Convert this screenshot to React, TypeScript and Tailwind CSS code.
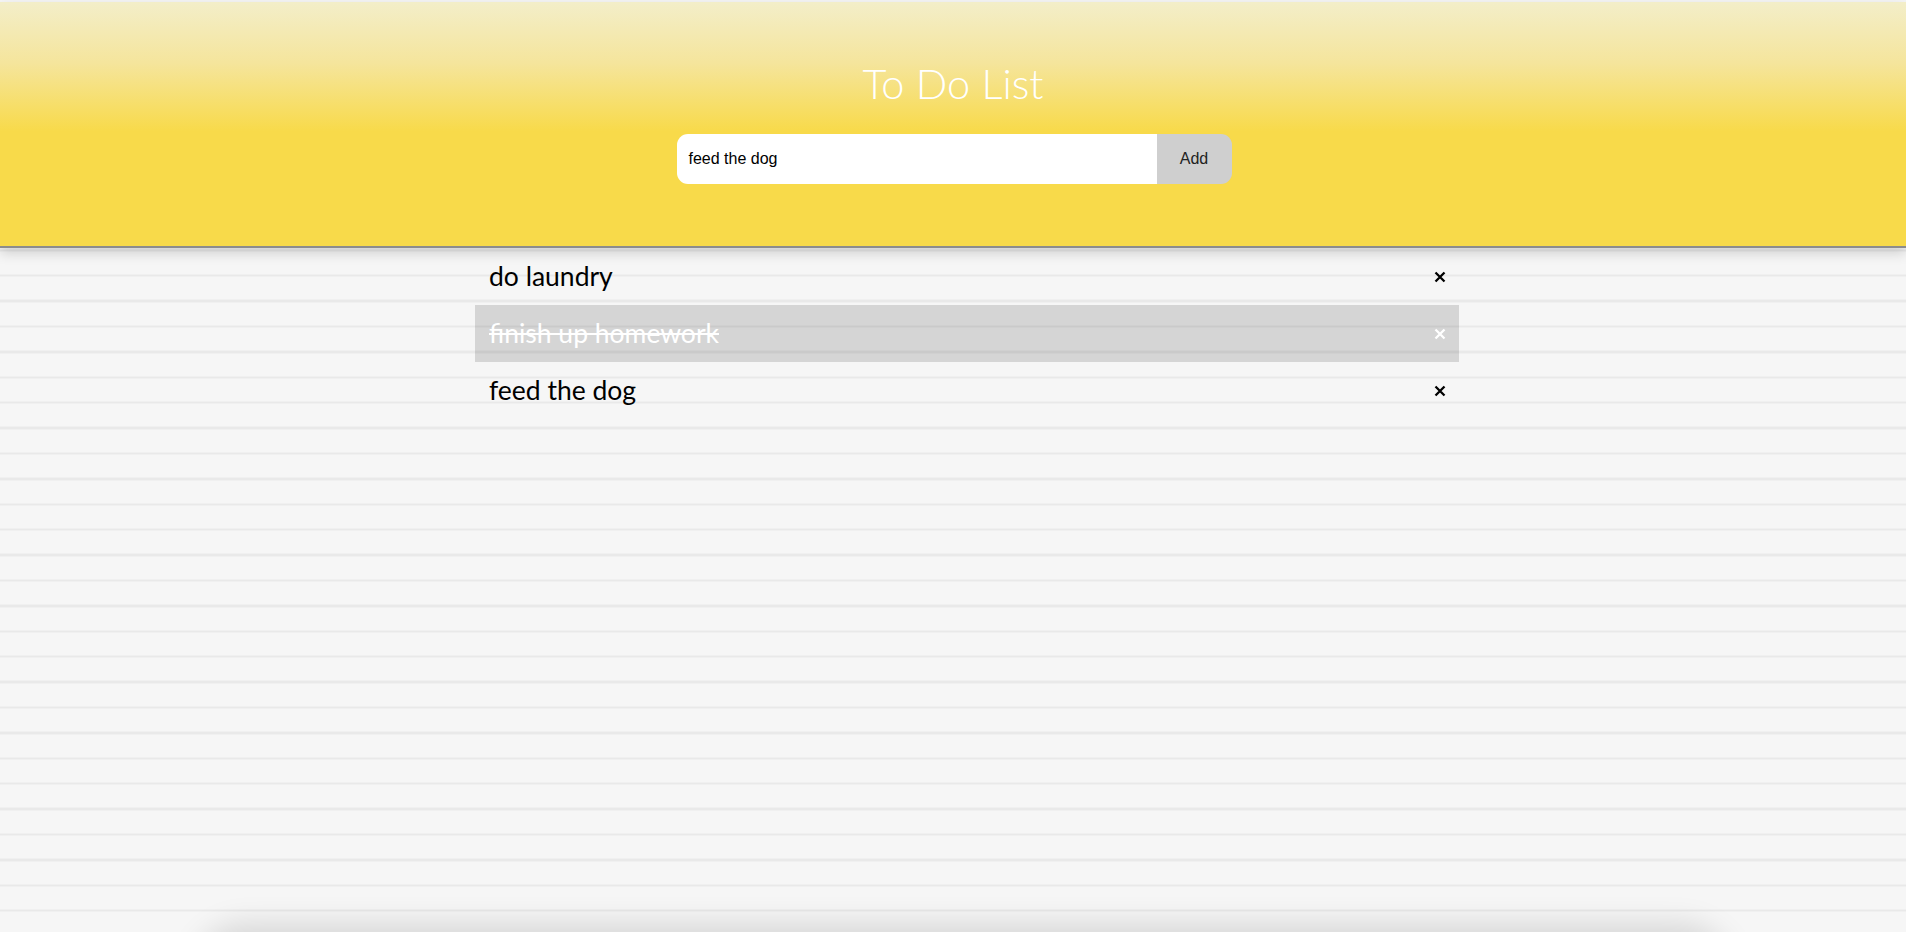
import React from "react";

type Item = { text: string; done: boolean };

const items: Item[] = [
  { text: "do laundry", done: false },
  { text: "finish up homework", done: true },
  { text: "feed the dog", done: false },
];

function Close({ white }: { white: boolean }) {
  return (
    <svg width="12" height="12" viewBox="0 0 12 12" className="shrink-0">
      <path
        d="M1.5 1.5 L10.5 10.5 M10.5 1.5 L1.5 10.5"
        stroke={white ? "#ffffff" : "#000000"}
        strokeWidth="2.3"
        strokeLinecap="butt"
      />
    </svg>
  );
}

export default function App() {
  return (
    <div
      className="relative h-[932px] w-full overflow-hidden bg-[#f6f6f6] bg-[repeating-linear-gradient(to_bottom,#f6f6f6_0px,#f6f6f6_23px,#e9e9e9_23px,#e9e9e9_25.4px)] bg-[position:0_-2.5px]"
      style={{ fontFamily: "Lato, 'Open Sans', sans-serif" }}
    >
      <header className="relative z-10 mt-[2px] flex h-[246px] flex-col items-center border-b-2 border-[#8c8c8c] bg-[linear-gradient(to_bottom,#f3eec9_0%,#f5e59c_25%,#f8da4a_53%,#f8da4a_100%)] shadow-[0_5px_12px_rgba(0,0,0,0.16)]">
        <h1 className="mt-[59px] text-[41.5px] leading-[45px] font-light text-white" style={{ fontFamily: "Lato, sans-serif" }}>
          To Do List
        </h1>
        <div className="mt-[28px] flex h-[50px] w-[555px] translate-x-[1px]">
          <div
            className="flex flex-1 items-center rounded-l-[11px] bg-white pl-[12px] text-[16px] text-black"
            style={{ fontFamily: "'Liberation Sans', Arial, sans-serif" }}
          >
            feed the dog
          </div>
          <div
            className="flex w-[75px] items-center justify-center rounded-r-[11px] bg-[#cfcfcf] text-[16px] text-[#222]"
            style={{ fontFamily: "'Liberation Sans', Arial, sans-serif" }}
          >
            Add
          </div>
        </div>
      </header>

      <ul className="ml-[475px] w-[984px]">
        {items.map((it, i) => (
          <li
            key={i}
            className={
              "flex h-[57px] items-center justify-between pl-[14px] pr-[13px] text-[26.5px] " +
              (it.done ? "bg-black/[0.135] text-white line-through decoration-[2px]" : "text-black")
            }
          >
            <span className="leading-none">{it.text}</span>
            <Close white={it.done} />
          </li>
        ))}
      </ul>

      <div className="absolute left-[205px] right-[185px] top-[936px] h-[80px] rounded-[40px] shadow-[0_0_30px_12px_rgba(0,0,0,0.13)]" />
    </div>
  );
}
